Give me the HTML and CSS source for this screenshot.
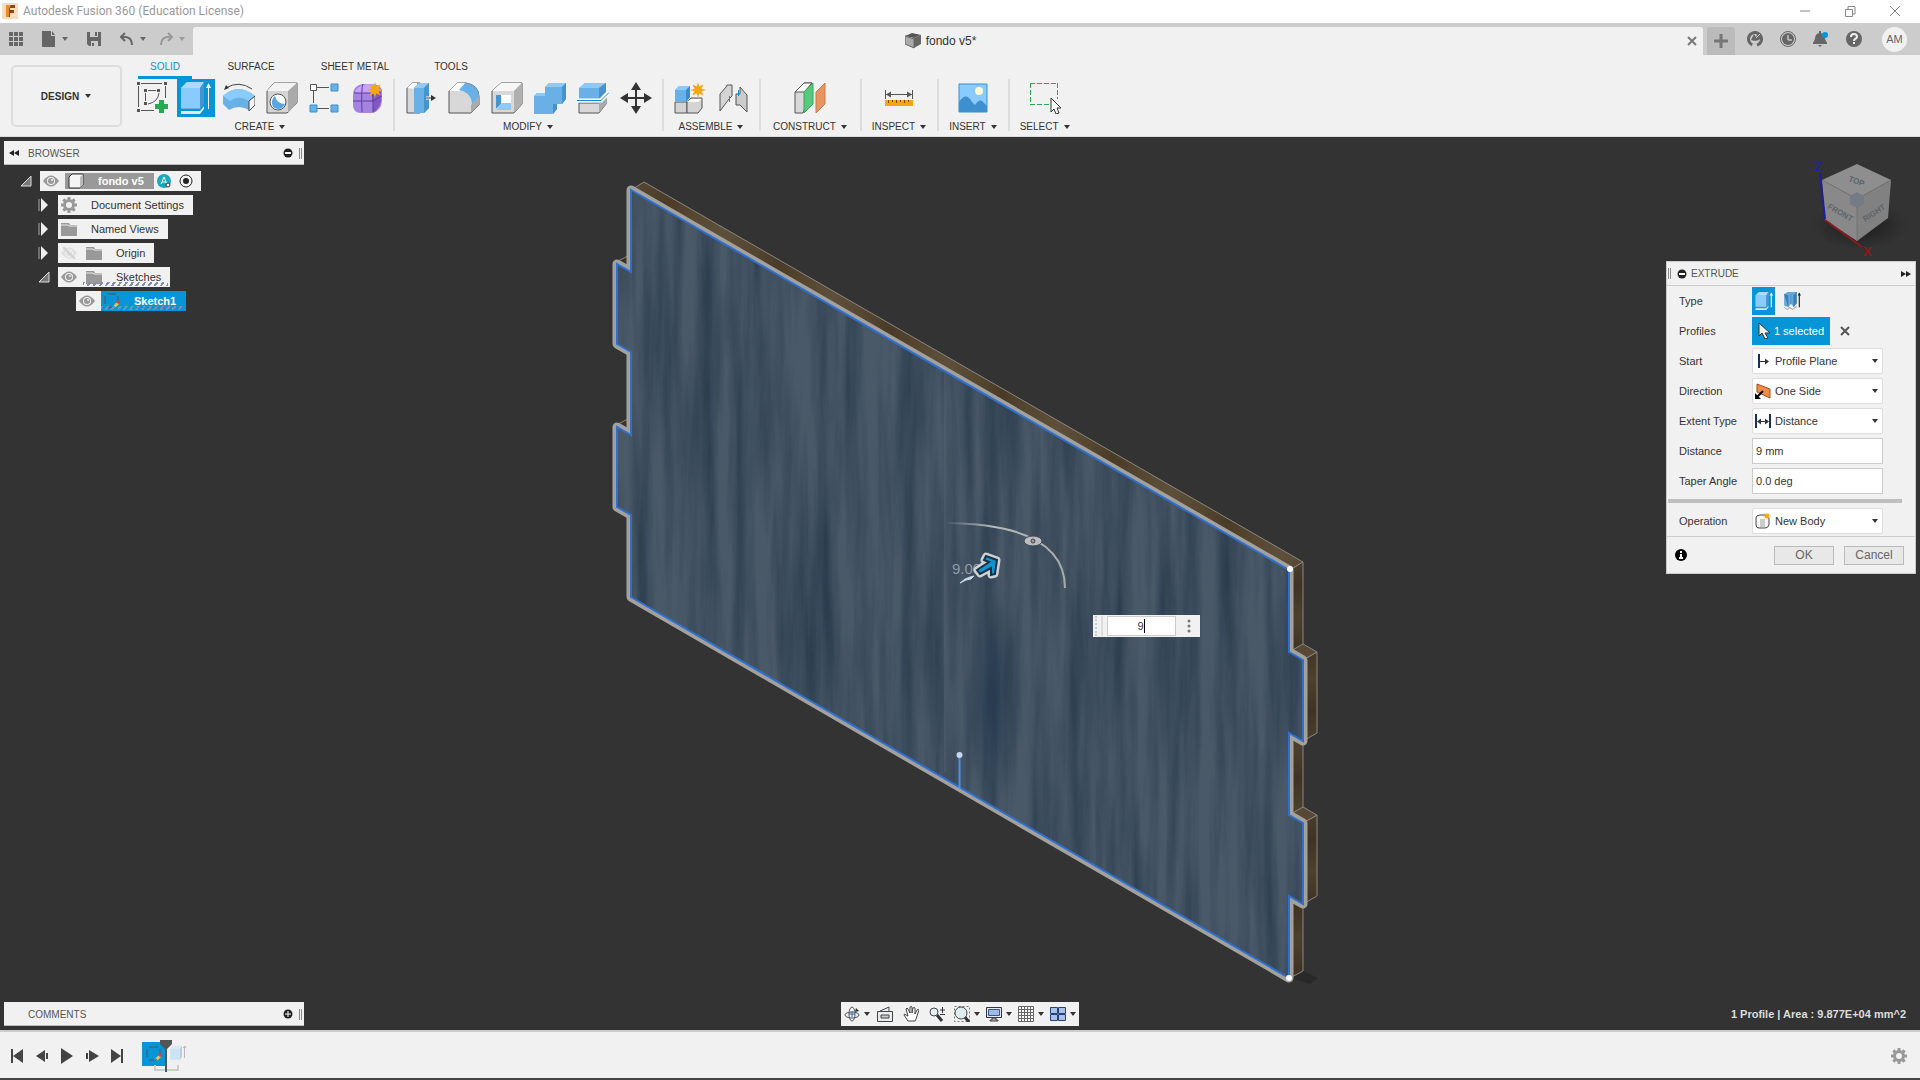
FILE: index.html
```html
<!DOCTYPE html>
<html lang="en">
<head>
    <meta charset="UTF-8">
    <title>Autodesk Fusion 360 (Education License)</title>
    <link rel="stylesheet" href="styles.css">
</head>
<body>
    <!-- shared icons -->
    <svg class="sprite" width="0" height="0">
        <symbol id="caret" viewBox="0 0 8 6"><path d="M1 1h6L4 5z" fill="currentColor"/></symbol>
        <symbol id="eye" viewBox="0 0 16 12"><path d="M0 6Q8-5 16 6Q8 17 0 6z" fill="#999"/><circle cx="8" cy="6" r="4" fill="#f1f1f1"/><circle cx="8" cy="6" r="3" fill="#999"/><circle cx="9" cy="5" r="1" fill="#f1f1f1"/></symbol>
        <symbol id="folder" viewBox="0 0 16 14"><path d="M0 1h8l1 2h7v11H0z" fill="#999"/><path d="M0 3h7l1 1h8" stroke="#e8e8e8" fill="none"/></symbol>
        <symbol id="gear" viewBox="0 0 16 16"><g fill="#999"><path d="M6.500 0h3v16h-3zM0 6.500h16v3H0z"/><path d="M6.500 0h3v16h-3zM0 6.500h16v3H0z" transform="rotate(45 8 8)"/><circle cx="8" cy="8" r="6"/></g><circle cx="8" cy="8" r="3" fill="#f1f1f1"/></symbol>
        <symbol id="opened" viewBox="0 0 12 12"><path d="M11 1v10H1z" fill="#777" stroke="#ddd"/></symbol>
        <symbol id="closed" viewBox="0 0 12 14"><path d="M1 1v12" stroke="#aaa" fill="none"/><path d="M3 0v14l7-7z" fill="#eee"/></symbol>
        <symbol id="sketch" viewBox="0 0 16 16"><path d="M3 1h9M1 3v8M14 3v6M3 14h5" fill="none" stroke="#555"/><path d="M9 15l1-3 3-3 2 2-3 3z" fill="#f3c13a"/><path d="M9 15l1-2 1 1z" fill="#333"/><path d="M12 9l2-2 2 2-2 2z" fill="#e23b3b"/></symbol>
        <symbol id="star" viewBox="0 0 16 16"><path d="M8 0l1.200 4.500L13.600 2.400 11.500 6.800 16 8l-4.500 1.200 2.100 4.400-4.400-2.100L8 16l-1.200-4.500-4.400 2.100 2.100-4.400L0 8l4.500-1.200L2.400 2.400l4.400 2.100z" fill="#f9a60a"/></symbol>
        <symbol id="prism" viewBox="0 0 32 32"><path d="M1 6l6-6h17v21l-4 6H1z" fill="#68b0e5"/><path d="M1 6l6-6h17l-4 6z" fill="#abdcff"/><path d="M1 6h19v20H1z" fill="#8acbff"/><path d="M20 6l4-6v21l-4 6z" fill="#4594cf"/><path d="M1 29h19l4-5v3l-4 5H1z" fill="#e6e6e6"/></symbol>
    </svg>

    <header class="title-bar">
        <svg width="16" height="16" viewBox="0 0 16 16"><path d="M0 0h16v16H0z" fill="#fbdcbd"/><path d="M4 2h9v3H8v2h4v3H8v4H4z" fill="#8b4a14"/><path d="M4 2h5l-2 4v8H4z" fill="#ec8b25"/></svg>
        <h1>Autodesk Fusion 360 (Education License)</h1>
        <div class="window-controls">
            <button aria-label="Minimize"><svg width="12" height="12"><path d="M1 6h10" stroke="#888"/></svg></button>
            <button aria-label="Restore"><svg width="12" height="12"><path d="M1.500 4.500h7v7h-7zM4 4V1.500h7V9H9" fill="none" stroke="#888"/></svg></button>
            <button aria-label="Close"><svg width="12" height="12"><path d="M1 1l10 10M11 1L1 11" stroke="#888"/></svg></button>
        </div>
    </header>

    <div class="tab-bar">
        <div class="quick-access">
            <button class="quick-grid" aria-label="Data panel"><svg width="14" height="14"><path d="M0 0h4v4H0zM5 0h4v4H5zM10 0h4v4h-4zM0 5h4v4H0zM5 5h4v4H5zM10 5h4v4h-4zM0 10h4v4H0zM5 10h4v4H5zM10 10h4v4h-4z" fill="#666"/></svg></button>
            <button class="quick-file" aria-label="File"><svg width="14" height="16"><path d="M0 0h9v5h4v11H0z" fill="#666"/><path d="M10 0l3 4h-3z" fill="#666"/></svg><svg width="8" height="6"><use href="#caret"/></svg></button>
            <button class="quick-save" aria-label="Save"><svg width="14" height="14"><path d="M0 0h14v14H2l-2-2z" fill="#666"/><path d="M3 0h8v5H3zM4 9h7v5H4z" fill="#ccc"/><path d="M8 0h2v4H8zM5 11h2v3H5z" fill="#666"/></svg></button>
            <button class="quick-undo" aria-label="Undo"><svg width="14" height="14"><path d="M5 1L1 5l4 4M1 5h5q6 1 6 8" stroke="#666" stroke-width="2" fill="none"/></svg><svg width="8" height="6"><use href="#caret"/></svg></button>
            <button class="quick-redo" aria-label="Redo"><svg width="14" height="14"><path d="M9 1l4 4-4 4M13 5H8q-6 1-6 8" stroke="#999" stroke-width="2" fill="none"/></svg><svg width="8" height="6"><use href="#caret"/></svg></button>
        </div>
        <div class="document-tab">
            <svg width="16" height="16"><path d="M0 3l7-3 9 2-7 3z" fill="#555"/><path d="M0 3l9 3v9l-9-4z" fill="#aaa" stroke="#666"/><path d="M9 5l7-3v9l-7 4z" fill="#666"/></svg>
            <span>fondo v5*</span>
            <button class="close-tab" aria-label="Close document"><svg width="10" height="10"><path d="M1 1l8 8M9 1L1 9" stroke="#777" stroke-width="2"/></svg></button>
        </div>
        <button class="new-tab" aria-label="New design"><svg width="14" height="14"><path d="M7 0v14M0 7h14" stroke="#777" stroke-width="3"/></svg></button>
        <div class="account-tools">
            <button aria-label="Extensions"><svg width="16" height="16"><circle cx="8" cy="8" r="6.500" fill="none" stroke="#666" stroke-width="3" stroke-dasharray="35 6" transform="rotate(115 8 8)"/><path d="M4 9l3-6 2 3 2-4 1 3 3 0-3 4-4 1z" fill="#666"/><path d="M9 7l4-4" stroke="#ccc"/></svg></button>
            <button aria-label="Job status"><svg width="16" height="16"><circle cx="8" cy="8" r="7.500" fill="none" stroke="#666"/><circle cx="8" cy="8" r="6" fill="#666"/><path d="M8 4v5h4" stroke="#eee" fill="none"/></svg></button>
            <button aria-label="Notifications"><svg width="16" height="16"><path d="M6 0h2v2q4 1 4 6l2 4v1H0v-1l2-4Q2 3 6 2zM5 14h4l-2 2z" fill="#666"/><circle cx="12" cy="4" r="3" fill="#0696d7"/></svg></button>
            <button aria-label="Help"><svg width="16" height="16"><circle cx="8" cy="8" r="8" fill="#666"/><path d="M5 6q0-3 3-3t3 3q0 1-2 2-1 1-1 2M8 11v2" stroke="#eee" stroke-width="2" fill="none"/></svg></button>
            <button class="avatar">AM</button>
        </div>
    </div>

    <div class="ribbon">
        <button class="workspace">DESIGN <svg width="8" height="6"><use href="#caret"/></svg></button>
        <div class="ribbon-main">
            <nav class="ribbon-tabs">
                <a class="tab-solid active" href="#">SOLID</a>
                <a class="tab-surface" href="#">SURFACE</a>
                <a class="tab-sheet" href="#">SHEET METAL</a>
                <a class="tab-tools" href="#">TOOLS</a>
            </nav>
            <div class="ribbon-groups">
                <div class="group">
                    <div class="tools">
                        <button aria-label="Create sketch"><svg width="32" height="32"><path d="M4 1.500h21M1.500 4v21M28.500 4v12M4 28.500h13" fill="none" stroke="#555"/><path d="M11 8.500h8M8.500 11v8M22 11q-1 9-11 11" fill="none" stroke="#555"/><path d="M0 0h3v3H0zM27 0h3v3h-3zM0 27h3v3H0zM7 7h3v3H7zM20 7h3v3h-3zM7 20h3v3H7z" fill="#555"/><path d="M22 18h5v4h4v5h-4v4h-5v-4h-4v-5h4z" fill="#22ab51"/></svg></button>
                        <button class="selected" aria-label="Extrude"><svg width="32" height="32"><use href="#prism"/><path d="M28.500 27V4" stroke="#fff"/><path d="M26 6l2.500-5L31 6z" fill="#fff"/></svg></button>
                        <button aria-label="Revolve"><svg width="32" height="32"><path d="M0 14Q15 0 32 14l-6 5v9q-10-6-20 0l-6-6z" fill="#68b0e5"/><path d="M0 14Q15 0 32 14l-6 5q-10-7-19 0z" fill="#8acbff"/><path d="M26 19l6-5v9l-6 6z" fill="#f5f5f5" stroke="#444"/><path d="M3 6q13-8 26 1" stroke="#444" fill="none"/><path d="M1 8l2-5 3 3z" fill="#333"/></svg></button>
                        <button aria-label="Hole"><svg width="32" height="32"><path d="M1 9l7-8h23v20L21 31H1z" fill="#d4d4d4" stroke="#555"/><path d="M1 9l7-8h23l-9 8z" fill="#f3f3f3"/><path d="M22 9l9-8v20l-9 10z" fill="#aaa"/><circle cx="12" cy="20" r="8" fill="#fff" stroke="#555"/><path d="M9 14q2 8 10 8-2 5-7 5-7-1-6-8 1-4 3-5z" fill="#56a6e4"/></svg></button>
                        <button aria-label="Rectangular pattern"><svg width="32" height="32"><path d="M8 5.500h12M4.500 9v12M8 26.500h12" stroke="#555"/><path d="M1.500 2.500h6v6h-6z" fill="#fff" stroke="#555"/><path d="M22 2h7v7h-7zM1 23h7v7H1zM22 23h7v7h-7z" fill="#68b0e5" stroke="#3d8fce"/></svg></button>
                        <button aria-label="Create form"><svg width="32" height="32"><path d="M1 13q0-9 9-11h8q12 0 12 8v9q-1 10-10 12H8q-7-1-7-8z" fill="#a583e3"/><path d="M3 9q5-7 15-7l6 2-5 7H5z" fill="#c6a4fa"/><path d="M21 12l8-3v11q-3 8-8 11z" fill="#8257c4"/><path d="M11 2q-2 4-1 28M1 19h20l9-5M2 11h18q1 0 1 19M21 11l4-6" stroke="#5e3d9c" fill="none"/><use href="#star" x="15" y="0" width="16" height="16"/></svg></button>
                    </div>
                    <button class="group-label">CREATE <svg width="8" height="6"><use href="#caret"/></svg></button>
                </div>
                <div class="group">
                    <div class="tools">
                        <button aria-label="Press pull"><svg width="32" height="32"><path d="M2 6l5-5h8v30H2z" fill="#d8d8d8" stroke="#555"/><path d="M2 6l5-5h5v6z" fill="#fff"/><path d="M9 6l5-5h10v25l-5 5H9z" fill="#68b0e5"/><path d="M9 6l5-5h10l-5 5z" fill="#8acbff"/><path d="M19 6l5-5v25l-5 5z" fill="#4594cf"/><path d="M21 16h6" stroke="#fff" stroke-width="3"/><path d="M21 16h7" stroke="#333"/><path d="M26 13l5 3-5 3z" fill="#333"/></svg></button>
                        <button aria-label="Fillet"><svg width="32" height="32"><path d="M1 9l8-8h9q13 2 13 14v8l-8 8H1z" fill="#d8d8d8" stroke="#555"/><path d="M9 1h9l-6 8H1z" fill="#fff"/><path d="M23 23l8-8v8l-8 8z" fill="#aaa"/><path d="M18 1q13 2 13 14l-7 7q-1-12-13-14l6-7z" fill="#68b0e5"/></svg></button>
                        <button aria-label="Shell"><svg width="32" height="32"><path d="M1 9l9-8h21v21l-8 9H1z" fill="#d8d8d8" stroke="#555"/><path d="M1 9l9-8h21l-8 8z" fill="#f6f6f6"/><path d="M23 9l8-8v21l-8 9z" fill="#b0b0b0"/><path d="M5 13h15v15H5z" fill="#fff"/><path d="M5 13h5v9l-5 5z" fill="#4594cf"/><path d="M5 28l6-7h9v7z" fill="#8acbff"/></svg></button>
                        <button aria-label="Combine"><svg width="32" height="32"><path d="M0 14l3-3h8V5l4-4h17v16l-4 5h-5v5l-4 5H0z" fill="#68b0e5"/><path d="M0 14l3-3h8v3zM11 5l4-4h17l-4 4z" fill="#8acbff"/><path d="M28 5l4-4v16l-4 5zM19 22h4v5l-4 5z" fill="#4594cf"/></svg></button>
                        <button aria-label="Split body"><svg width="32" height="32"><path d="M2 21h20l7-8v9l-7 9H2z" fill="#d8d8d8" stroke="#555"/><path d="M22 21l7-8v9l-7 9z" fill="#aaa"/><path d="M2 6l6-5h21v8l-7 8H2z" fill="#68b0e5"/><path d="M2 6l6-5h21l-7 5z" fill="#8acbff"/><path d="M22 6l7-5v9l-7 7z" fill="#4594cf"/><path d="M0 18.500h24l8-8" stroke="#fff" stroke-width="4" fill="none"/><path d="M0 18.500h24l8-8" stroke="#0b86d9" fill="none"/></svg></button>
                        <button aria-label="Move"><svg width="32" height="32"><path d="M16 5v22M5 16h22" stroke="#333" stroke-width="2"/><path d="M16 0l5 8H11zM16 32l5-8H11zM0 16l8-5v10zM32 16l-8-5v10z" fill="#333"/></svg></button>
                    </div>
                    <button class="group-label">MODIFY <svg width="8" height="6"><use href="#caret"/></svg></button>
                </div>
                <div class="group">
                    <div class="tools">
                        <button aria-label="New component"><svg width="32" height="32"><path d="M1 20h12v11H1z" fill="#d4d4d4" stroke="#555"/><path d="M13 20l4-4h11v10l-4 5H13z" fill="#d4d4d4" stroke="#555"/><path d="M13 20l4-3h11l-4 3z" fill="#fff"/><path d="M1 8l4-4h11v11l-4 5H1z" fill="#68b0e5"/><path d="M1 8l4-4h11l-4 4z" fill="#8acbff"/><path d="M12 8l4-4v11l-4 5z" fill="#3d8bc6"/><use href="#star" x="16" y="0" width="16" height="16"/></svg></button>
                        <button aria-label="Joint"><svg width="32" height="32"><path d="M3 12l6-7 1-2h5v11l-3 3-3 4-6 8z" fill="#d4d4d4" stroke="#555"/><path d="M23 5l7 8v17l-7-7h-4V12h4z" fill="#ccc" stroke="#555"/><path d="M12.500 14v6M21.500 8v6" stroke="#0696d7"/></svg></button>
                    </div>
                    <button class="group-label">ASSEMBLE <svg width="8" height="6"><use href="#caret"/></svg></button>
                </div>
                <div class="group construct">
                    <div class="tools">
                        <button aria-label="Offset plane"><svg width="32" height="32"><path d="M1 10l9-9h8v5L9 31H1z" fill="#d8d8d8" stroke="#555"/><path d="M1 10l9-9h8l-8 9z" fill="#fff" stroke="#555"/><path d="M10 10l9-9v21l-9 9z" fill="#58c87c" stroke="#38a55d"/><path d="M22 10l9-9v21l-9 9z" fill="#e79562" stroke="#c97b49"/></svg></button>
                    </div>
                    <button class="group-label">CONSTRUCT <svg width="8" height="6"><use href="#caret"/></svg></button>
                </div>
                <div class="group">
                    <div class="tools">
                        <button aria-label="Measure"><svg width="32" height="32"><path d="M2.500 8v9M29.500 8v9M3 12.500h26" stroke="#555"/><path d="M3 12.500l5-3v6zM29 12.500l-5-3v6z" fill="#555"/><path d="M2 18h28v6H2z" fill="#f9a60a"/><path d="M5.500 18v3M9.500 18v2M13.500 18v3M17.500 18v2M21.500 18v3M25.500 18v2" stroke="#704c08"/></svg></button>
                    </div>
                    <button class="group-label">INSPECT <svg width="8" height="6"><use href="#caret"/></svg></button>
                </div>
                <div class="group">
                    <div class="tools">
                        <button aria-label="Insert image"><svg width="32" height="32"><path d="M2 2h28v28H2z" fill="#8acbff" stroke="#3d8fce"/><path d="M2 20q7-11 13 0l3 3q5-7 8-3l4 4v6H2z" fill="#3d8fce"/><circle cx="22" cy="9" r="4" fill="#fffbd0"/></svg></button>
                    </div>
                    <button class="group-label">INSERT <svg width="8" height="6"><use href="#caret"/></svg></button>
                </div>
                <div class="group">
                    <div class="tools">
                        <button aria-label="Select"><svg width="32" height="32"><path d="M1 1.500h27M1 22.500h20M1.500 1v22M28.500 1v16" stroke="#22ab51" stroke-dasharray="5 2"/><path d="M22 16v14l3-3 2 5 3-1-2-5h4z" fill="#fff" stroke="#333"/></svg></button>
                    </div>
                    <button class="group-label">SELECT <svg width="8" height="6"><use href="#caret"/></svg></button>
                </div>
            </div>
        </div>
    </div>

    <main class="viewport">
        <!-- model, drawn in window coordinates -->
        <svg class="model" viewBox="0 137 1920 893" preserveAspectRatio="xMidYMid slice">
            <defs>
                <filter id="grain" x="0" y="0" width="1" height="1" color-interpolation-filters="sRGB">
                    <feTurbulence type="fractalNoise" baseFrequency="0.06 0.004" numOctaves="5" seed="11"/>
                    <feColorMatrix values="0 0 0 0 .17  0 0 0 0 .24  0 0 0 0 .31  1.800 0 0 0 -.6"/>
                    <feComposite in2="SourceGraphic" operator="in"/>
                </filter>
                <linearGradient id="edge" x1="0" y1="0" x2="60" y2="20" gradientUnits="userSpaceOnUse" spreadMethod="reflect">
                    <stop offset="0" stop-color="#5e4f3b"/><stop offset=".6" stop-color="#54452f"/><stop offset="1" stop-color="#493b28"/>
                </linearGradient>
                <linearGradient id="side" x1="0" y1="0" x2="8" y2="30" gradientUnits="userSpaceOnUse" spreadMethod="reflect">
                    <stop offset="0" stop-color="#4c402e"/><stop offset="1" stop-color="#3f3424"/>
                </linearGradient>
                <radialGradient id="knot"><stop offset="0" stop-color="#20374f" stop-opacity=".6"/><stop offset="1" stop-color="#20374f" stop-opacity="0"/></radialGradient>
                <linearGradient id="arc"><stop offset="0" stop-color="#bbb" stop-opacity="0"/><stop offset=".4" stop-color="#bbb"/><stop offset="1" stop-color="#aaa"/></linearGradient>
                <path id="face" d="M631 190L1289 570V652L1303 660V741L1289 733V815L1303 823V904L1289 896V978L631 597V515L617 507V427L631 435V352L617 344V264L631 272z"/>
            </defs>
            <path d="M1292 978l12-7 14 7-8 6z" fill="#292929"/>
            <g stroke="#8a8780">
                <path d="M631 190l13-8L1303 562l-13 8z" fill="url(#edge)"/>
                <path d="M1290 570l13-8v409l-13 7z" fill="url(#side)"/>
                <path d="M1303 660l14-8v81l-14 8zM1303 823l14-8v81l-14 8z" fill="url(#side)"/>
                <path d="M1289 652l14-8 14 8-14 8zM1289 815l14-8 14 8-14 8z" fill="#574934"/>
                <path d="M616 262l14-7v16zM616 425l14-7v16z" fill="#3c3222"/>
            </g>
            <use href="#face" fill="none" stroke="#a3a19e" stroke-width="9" stroke-linejoin="round"/>
            <use href="#face" fill="#4a5968"/>
            <use href="#face" fill="#4a5968" filter="url(#grain)"/>
            <ellipse cx="990" cy="700" rx="28" ry="110" fill="url(#knot)"/>
            <path d="M945 372v400" stroke="#5d6873" stroke-width="2" opacity=".3"/>
            <use href="#face" fill="none" stroke="#2f70cf" stroke-width="2"/>
            <circle cx="1290" cy="569" r="3" fill="#fff"/>
            <circle cx="1289" cy="978" r="3" fill="#fff"/>
            <path d="M959.500 757v31" stroke="#4b93e0" stroke-width="2"/>
            <circle cx="959.500" cy="755" r="3" fill="#c5d8ee"/>
            <path d="M945 523Q1065 524 1065 588" fill="none" stroke="url(#arc)" stroke-width="2"/>
            <ellipse cx="1033" cy="541" rx="9" ry="5" fill="#babdc2" stroke="#3f4750"/>
            <circle cx="1033" cy="541" r="2" fill="#999" stroke="#444"/>
            <text x="952" y="574" class="dimension">9.00</text>
            <path d="M960 583l5-4 5-2 4-1-3 3-5 1z" fill="#c8d8ee" stroke="#c8d8ee"/>
            <path d="M977 570l12-8-5-2 2-4 11 4-2 14-4 1v-7l-11 6z" stroke="#cfd2d5" stroke-width="7" stroke-linejoin="round" fill="none"/>
            <path d="M977 570l12-8-5-2 2-4 11 4-2 14-4 1v-7l-11 6z" fill="#1193cf" stroke="#173142" stroke-width="2"/>
        </svg>

        <section class="browser">
            <div class="panel-bar">
                <button class="collapse" aria-label="Collapse"><svg width="12" height="8"><path d="M6 1v6L1 4zM11 1v6L6 4z" fill="#222"/></svg></button>
                <h2>BROWSER</h2>
                <button aria-label="Options"><svg width="10" height="10"><circle cx="5" cy="5" r="4.500" fill="#222"/><path d="M2 5h6" stroke="#fff" stroke-width="2"/></svg></button>
                <i class="grip"></i>
            </div>
            <ul class="tree">
                <li class="level-0">
                    <button aria-label="Close fondo v5"><svg width="12" height="12"><use href="#opened"/></svg></button>
                    <div class="node root">
                        <svg width="16" height="12"><use href="#eye"/></svg>
                        <span class="component"><svg width="16" height="16"><path d="M1 4l3-3h11v11l-3 3H1z" fill="#f4f4f4" stroke="#333"/><path d="M12 4l3-3v11l-3 3z" fill="#bbb"/></svg>fondo v5</span>
                        <svg width="14" height="14"><circle cx="7" cy="7" r="7" fill="#19a9bd"/><path d="M4 10l3-7 3 7M5 8h4" stroke="#fff" fill="none"/><circle cx="11" cy="11" r="2" fill="#fff" stroke="#333"/></svg>
                        <svg width="14" height="14"><circle cx="7" cy="7" r="6" fill="none" stroke="#222"/><circle cx="7" cy="7" r="3" fill="#222"/></svg>
                    </div>
                </li>
                <li class="level-1">
                    <button aria-label="Open Document Settings"><svg width="12" height="14"><use href="#closed"/></svg></button>
                    <div class="node"><svg width="16" height="16"><use href="#gear"/></svg><span>Document Settings</span></div>
                </li>
                <li class="level-1">
                    <button aria-label="Open Named Views"><svg width="12" height="14"><use href="#closed"/></svg></button>
                    <div class="node"><svg width="16" height="14"><use href="#folder"/></svg><span>Named Views</span></div>
                </li>
                <li class="level-1">
                    <button aria-label="Open Origin"><svg width="12" height="14"><use href="#closed"/></svg></button>
                    <div class="node"><svg class="hidden-eye" width="16" height="12"><use href="#eye"/><path d="M2 0l12 12" stroke="#555" stroke-width="2"/></svg><svg width="16" height="14"><use href="#folder"/></svg><span>Origin</span></div>
                </li>
                <li class="level-1">
                    <button aria-label="Close Sketches"><svg width="12" height="12"><use href="#opened"/></svg></button>
                    <div class="node hatched"><svg width="16" height="12"><use href="#eye"/></svg><svg width="16" height="14"><use href="#folder"/></svg><span>Sketches</span></div>
                </li>
                <li class="level-2">
                    <div class="node hatched"><svg width="16" height="12"><use href="#eye"/></svg><span class="component blue"><svg width="16" height="16"><use href="#sketch"/></svg>Sketch1</span></div>
                </li>
            </ul>
        </section>

        <svg class="view-cube" width="100" height="105">
            <defs><radialGradient id="shade"><stop offset="0" stop-color="#1c1c1c"/><stop offset="1" stop-color="#333"/></radialGradient></defs>
            <ellipse cx="50" cy="70" rx="48" ry="24" fill="url(#shade)"/>
            <path d="M47 9l34 16-34 19-35-19z" fill="#8e8e8e"/>
            <path d="M12 25l35 19v42L15 65z" fill="#898989"/>
            <path d="M47 44l34-19-3 38-31 23z" fill="#818181"/>
            <path d="M12 25l35 19 34-19M47 44v42" stroke="#737373" fill="none"/>
            <path d="M40 41l7-4 7 4v8l-7 4-7-4z" fill="#757b82"/>
            <path d="M10 18l5 46" stroke="#1e1e9e" stroke-width="2"/>
            <path d="M15 65l37 27" stroke="#8b1a1a" stroke-width="2"/>
            <g font-weight="bold" font-size="8" fill="#5d646b">
                <text x="38" y="26" transform="rotate(20 38 26)">TOP</text>
                <text x="17" y="53" transform="rotate(30 17 53)">FRONT</text>
                <text x="55" y="67" transform="rotate(-33 55 67)">RIGHT</text>
            </g>
            <text x="4" y="16" class="axis-z">Z</text>
            <text x="53" y="101" class="axis-x">X</text>
        </svg>

        <form class="extrude">
            <div class="extrude-header">
                <i class="grip"></i>
                <svg width="10" height="10"><circle cx="5" cy="5" r="4.500" fill="#222"/><path d="M2 5h6" stroke="#fff" stroke-width="2"/></svg>
                <h2>EXTRUDE</h2>
                <button type="button" aria-label="Dock"><svg width="10" height="8"><path d="M0 1v6l5-3zM5 1v6l5-3z" fill="#222"/></svg></button>
            </div>
            <div class="row">
                <span class="row-label">Type</span>
                <button type="button" class="type on" aria-label="Extrude"><svg width="18" height="18" viewBox="0 0 32 32"><use href="#prism"/><path d="M29 27V2" stroke="#fff" stroke-width="2"/><path d="M26 6l3-5 3 5z" fill="#fff"/></svg></button>
                <button type="button" class="type" aria-label="Thin extrude"><svg width="18" height="18" viewBox="0 0 32 32"><path d="M2 26l5 4 5-4 5 4 7-6v3l-7 5-5-3-5 3-5-4z" fill="#aaa"/><path d="M2 4l6-4h16v20l-5 6-5-5-5 6-7-3z" fill="#68a8d8"/><path d="M2 4l7 2v20M14 4v18M19 6l5-6v20l-5 6z" fill="#3d80b8" stroke="#3d80b8"/><path d="M29 27V2" stroke="#222" stroke-width="2"/><path d="M26 6l3-5 3 5z" fill="#222"/></svg></button>
            </div>
            <div class="row">
                <span class="row-label">Profiles</span>
                <button type="button" class="selection"><svg width="12" height="16"><path d="M1 0v13l3-3 3 6 3-1-3-5h5z" fill="#eee" stroke="#333"/></svg>1 selected</button>
                <button type="button" class="clear" aria-label="Clear selection"><svg width="10" height="10"><path d="M1 1l8 8M9 1L1 9" stroke="#555" stroke-width="2"/></svg></button>
            </div>
            <div class="row">
                <label class="row-label" for="start">Start</label>
                <div class="picker">
                    <svg width="16" height="16"><path d="M4 1v14" stroke="#15305c" stroke-width="2"/><path d="M5 8.500h8" stroke="#333"/><path d="M10 5.500l4 3-4 3z" fill="#333"/></svg>
                    <select id="start"><option>Profile Plane</option></select>
                    <svg class="drop" width="8" height="6"><use href="#caret"/></svg>
                </div>
            </div>
            <div class="row">
                <label class="row-label" for="direction">Direction</label>
                <div class="picker">
                    <svg width="16" height="16"><path d="M2 1l13 5v9L2 9z" fill="#f08b48" stroke="#a44e1c"/><path d="M1 15l7-7" stroke="#000" stroke-width="2"/><path d="M0 16v-6l6 6z" fill="#000"/></svg>
                    <select id="direction"><option>One Side</option></select>
                    <svg class="drop" width="8" height="6"><use href="#caret"/></svg>
                </div>
            </div>
            <div class="row">
                <label class="row-label" for="extent">Extent Type</label>
                <div class="picker">
                    <svg width="16" height="16"><path d="M1 1v14M15 1v14" stroke="#15305c" stroke-width="2"/><path d="M4 8.500h8" stroke="#333"/><path d="M6 5.500l-4 3 4 3zM10 5.500l4 3-4 3z" fill="#333"/></svg>
                    <select id="extent"><option>Distance</option></select>
                    <svg class="drop" width="8" height="6"><use href="#caret"/></svg>
                </div>
            </div>
            <div class="row">
                <label class="row-label" for="distance">Distance</label>
                <input id="distance" type="text" value="9 mm">
            </div>
            <div class="row">
                <label class="row-label" for="taper">Taper Angle</label>
                <input id="taper" type="text" value="0.0 deg">
            </div>
            <hr>
            <div class="row">
                <label class="row-label" for="operation">Operation</label>
                <div class="picker">
                    <svg width="16" height="16"><path d="M1 5q0-3 4-3h6q3 1 3 4v6q-1 3-4 3H4q-3 0-3-3z" fill="#f7f7f7" stroke="#444"/><path d="M5 6h5v8H5z" fill="#ccc"/><use href="#star" x="8" y="-1" width="8" height="8"/></svg>
                    <select id="operation"><option>New Body</option></select>
                    <svg class="drop" width="8" height="6"><use href="#caret"/></svg>
                </div>
            </div>
            <div class="extrude-footer">
                <svg width="12" height="12"><circle cx="6" cy="6" r="6" fill="#000"/><path d="M6 2v2M6 5v4M4 9h4" stroke="#fff" stroke-width="2" fill="none"/></svg>
                <button type="button">OK</button>
                <button type="button">Cancel</button>
            </div>
        </form>

        <div class="value-box">
            <i class="drag"></i>
            <input type="text" value="9" aria-label="Distance value">
            <i class="cursor"></i>
            <button aria-label="More"><svg width="4" height="14"><circle cx="2" cy="2" r="1.500" fill="#777"/><circle cx="2" cy="7" r="1.500" fill="#777"/><circle cx="2" cy="12" r="1.500" fill="#777"/></svg></button>
        </div>

        <section class="comments panel-bar">
            <h2>COMMENTS</h2>
            <button aria-label="Add comment"><svg width="10" height="10"><circle cx="5" cy="5" r="4.500" fill="#222"/><path d="M2 5h6M5 2v6" stroke="#fff"/></svg></button>
            <i class="grip"></i>
        </section>

        <div class="nav-bar">
            <button class="menu" aria-label="Orbit"><svg width="16" height="16"><ellipse cx="8" cy="9" rx="7" ry="3" fill="none" stroke="#555"/><ellipse cx="8" cy="8" rx="3" ry="7" fill="none" stroke="#555"/><path d="M5 8h6M8 5v6" stroke="#1976d2"/><path d="M12 2l3 3-4 1z" fill="#333"/></svg><svg width="8" height="6"><use href="#caret"/></svg></button>
            <button aria-label="Look at"><svg width="16" height="16"><path d="M.500 5.500h15v10H.500zM3 5l9-4v4" fill="#e9ecf0" stroke="#444"/><path d="M4 9h8v3H4z" fill="#ccc" stroke="#444"/></svg></button>
            <button aria-label="Pan"><svg width="16" height="16"><path d="M5 15L1 9q0-2 2 0l2 1-2-7q1-2 2 0l2 4V1q1-1 2 0v6l1-5q2-1 2 0v6l2-4q1-1 2 0l-3 9-1 2z" fill="#fff" stroke="#444"/></svg></button>
            <button aria-label="Zoom"><svg width="16" height="16"><path d="M8 9l5 6" stroke="#333" stroke-width="3"/><circle cx="5" cy="6" r="4" fill="#e4f0f3" stroke="#444"/><path d="M11 4h5M13.500 1v6M11 8.500h5" stroke="#333"/></svg></button>
            <button class="menu" aria-label="Fit"><svg width="16" height="16"><path d="M.500.500h15v15H.500z" fill="none" stroke="#777" stroke-dasharray="2 2"/><path d="M10 10l5 6" stroke="#333" stroke-width="3"/><circle cx="7" cy="7" r="6" fill="#dfecef" stroke="#444"/></svg><svg width="8" height="6"><use href="#caret"/></svg></button>
            <button class="menu" aria-label="Display settings"><svg width="16" height="16"><path d="M.500 1.500h15v10H.500z" fill="#e4e8f2" stroke="#334"/><path d="M2.500 3.500h11v6h-11z" fill="#9dbbe6" stroke="#35558c"/><path d="M6 12h4v2h2v1H4v-1h2z" fill="#aaa" stroke="#444"/></svg><svg width="8" height="6"><use href="#caret"/></svg></button>
            <button class="menu" aria-label="Grid and snaps"><svg width="16" height="16"><path d="M.500.500h15v15H.500zM.500 3.500h15M.500 6.500h15M.500 9.500h15M.500 12.500h15M3.500 0v16M6.500 0v16M9.500 0v16M12.500 0v16" fill="#fff" stroke="#666"/></svg><svg width="8" height="6"><use href="#caret"/></svg></button>
            <button class="menu" aria-label="Viewports"><svg width="16" height="14"><path d="M.500.500h7v6h-7zM8.500.500h7v6h-7zM.500 7.500h7v6h-7zM8.500 7.500h7v6h-7z" fill="#a9c1e6" stroke="#24427a"/></svg><svg width="8" height="6"><use href="#caret"/></svg></button>
        </div>

        <p class="selection-info">1 Profile | Area : 9.877E+04 mm^2</p>
    </main>

    <footer class="timeline">
        <button aria-label="Go to start"><svg width="14" height="14"><path d="M1 0v14" stroke="#444" stroke-width="2"/><path d="M12 0v14L2 7z" fill="#444"/></svg></button>
        <button aria-label="Step back"><svg width="14" height="14"><path d="M9 1v12L0 7z" fill="#444"/><path d="M11 4v6" stroke="#444" stroke-width="2"/></svg></button>
        <button aria-label="Play"><svg width="14" height="16"><path d="M0 0v16l12-8z" fill="#444"/></svg></button>
        <button aria-label="Step forward"><svg width="14" height="14"><path d="M3 1v12l10-6z" fill="#444"/><path d="M1 4v6" stroke="#444" stroke-width="2"/></svg></button>
        <button aria-label="Go to end"><svg width="14" height="14"><path d="M0 0v14l10-7z" fill="#444"/><path d="M11 0v14" stroke="#444" stroke-width="2"/></svg></button>
        <svg class="features" width="48" height="34">
            <path d="M0 3h24v24H0z" fill="#0696d7"/>
            <use href="#sketch" x="4" y="7" width="16" height="16"/>
            <use href="#prism" x="28" y="7" width="16" height="16" opacity=".35"/>
            <path d="M42.500 7v12M41 9l2-2 1 2" stroke="#bbb" fill="none"/>
            <path d="M13 26v5h23v-5" stroke="#ccc" stroke-width="2" fill="none"/>
            <path d="M18 1h12v4l-5 5v23h-2V10l-5-5z" fill="#555"/>
        </svg>
        <button class="settings" aria-label="Settings"><svg width="16" height="16"><use href="#gear"/></svg></button>
    </footer>
</body>
</html>
```
FILE: styles.css
```css
* {
    box-sizing: border-box;
}
body {
    margin: 0;
    min-height: 100vh;
    display: flex;
    flex-direction: column;
    font-family: "Liberation Sans", Arial, sans-serif;
    font-size: 11px;
    color: #333;
    background-color: #f1f1f1;
}
button {
    display: flex;
    flex: none;
    align-items: center;
    justify-content: center;
    padding: 0;
    border: none;
    background: none;
    font: inherit;
    color: inherit;
}
svg {
    display: block;
    flex: none;
}
h1, h2, p, ul {
    margin: 0;
    padding: 0;
    font-weight: normal;
}
.sprite {
    position: absolute;
}

/* title bar */
.title-bar {
    height: 23px;
    padding: 0 19px 1px 2px;
    display: flex;
    align-items: center;
    gap: 5px;
    background-color: #fff;
}
.title-bar h1 {
    font: 12px Roboto, sans-serif;
    color: #999;
}
.window-controls {
    margin-left: auto;
    display: flex;
    gap: 33px;
}

/* document tabs */
.tab-bar {
    height: 32px;
    display: flex;
    background-color: #ccc;
    color: #666;
}
.quick-access {
    width: 193px;
    padding-left: 9px;
    display: flex;
}
.quick-access button {
    gap: 5px;
    justify-content: flex-start;
}
.quick-grid {
    width: 33px;
}
.quick-file {
    width: 45px;
}
.quick-save {
    width: 33px;
}
.quick-undo {
    width: 39px;
}
.quick-redo {
    width: 34px;
    color: #999;
}
.document-tab {
    flex: 1;
    margin-top: 4px;
    padding: 0 6px;
    display: flex;
    align-items: center;
    justify-content: center;
    gap: 5px;
    background-color: #f1f1f1;
    border-radius: 3px 3px 0 0;
    font-size: 12px;
    color: #333;
}
.document-tab svg:first-child {
    margin-left: auto;
}
.close-tab {
    margin-left: auto;
}
.new-tab {
    width: 28px;
    margin: 4px 12px 0 4px;
    border-radius: 3px 3px 0 0;
    background-color: #bbb;
}
.account-tools {
    display: flex;
    align-items: center;
    gap: 17px;
    padding-right: 13px;
}
.avatar {
    width: 25px;
    height: 25px;
    margin-left: 3px;
    border-radius: 50%;
    background-color: #f1f1f1;
}

/* ribbon */
.ribbon {
    height: 82px;
    padding-left: 11px;
    display: flex;
    border-bottom: 1px solid #ddd;
    font-size: 10px;
}
.workspace {
    width: 111px;
    height: 62px;
    margin: 10px 12px 0 0;
    gap: 5px;
    border: 2px solid #ddd;
    border-radius: 5px;
    font-weight: bold;
}
.ribbon-main {
    flex: 1;
}
.ribbon-tabs {
    height: 24px;
    display: flex;
    padding-left: 4px;
}
.ribbon-tabs a {
    padding-top: 6px;
    text-align: center;
    text-decoration: none;
    color: #333;
}
.tab-solid {
    width: 54px;
}
.ribbon-tabs .active {
    color: #0696d7;
    border-bottom: 3px solid #0696d7;
}
.tab-surface {
    width: 118px;
}
.tab-sheet {
    width: 90px;
}
.tab-tools {
    width: 102px;
}
.ribbon-groups {
    display: flex;
}
.group {
    height: 52px;
    padding: 0 7px;
    border-right: 2px solid #ddd;
}
.group:first-child {
    padding: 0 6px 0 0;
}
.group:last-child {
    border: none;
}
.tools {
    display: flex;
    justify-content: center;
    gap: 5px;
}
.tools button {
    width: 38px;
    height: 38px;
}
.tools .selected {
    background-color: #0696d7;
}
.group-label {
    margin: 4px auto 0;
    padding: 0 3px;
    gap: 4px;
    white-space: nowrap;
}
.construct .group-label {
    padding: 0 5px;
}

/* viewport */
.viewport {
    flex: 1;
    position: relative;
    overflow: hidden;
    background-color: #333;
}
.model {
    position: absolute;
    width: 100%;
    height: 100%;
}
.dimension {
    font-size: 15px;
    fill: #8d9aa7;
}
.panel-bar {
    width: 300px;
    height: 24px;
    padding: 1px 2px 0 4px;
    display: flex;
    align-items: center;
    gap: 6px;
    background-color: #f1f1f1;
    border-bottom: 1px solid #bbb;
}
.panel-bar h2, .extrude h2 {
    flex: 1;
    font-size: 10px;
    color: #555;
}
.panel-bar .collapse {
    margin-right: 2px;
}
.grip {
    width: 3px;
    height: 11px;
    border-left: 1px solid #888;
    border-right: 1px solid #888;
}
.browser {
    position: absolute;
    top: 4px;
    left: 4px;
}
.comments {
    position: absolute;
    left: 4px;
    bottom: 4px;
    padding-left: 24px;
}

/* browser tree */
.tree {
    margin-top: 6px;
    list-style: none;
}
.tree li {
    height: 20px;
    margin-bottom: 4px;
    display: flex;
    align-items: center;
    gap: 8px;
}
.level-0 {
    padding-left: 16px;
}
.level-1 {
    padding-left: 34px;
}
.level-2 {
    padding-left: 72px;
}
.node {
    height: 20px;
    padding: 0 9px 0 3px;
    display: flex;
    align-items: center;
    gap: 9px;
    background-color: #f1f1f1;
}
.node > span {
    margin-left: 5px;
}
.node.root {
    padding-right: 8px;
    gap: 6px;
}
.node .component {
    height: 16px;
    margin-left: 0;
    padding: 0 10px 0 3px;
    display: flex;
    align-items: center;
    gap: 14px;
    font-weight: bold;
    color: #fff;
    background-color: #999;
}
.root > svg:nth-of-type(2) {
    margin: 0 2px 0 -3px;
}
.node .blue {
    height: 20px;
    margin: 0 -9px 0 -3px;
    background-color: #0696d7;
}
.hidden-eye {
    opacity: .2;
}
.hatched {
    position: relative;
}
.hatched::after {
    content: "";
    position: absolute;
    left: 25px;
    right: 2px;
    bottom: 1px;
    height: 4px;
    background: repeating-linear-gradient(125deg, #7d8fb0 0 2px, transparent 2px 5px);
}

.view-cube {
    position: absolute;
    top: 18px;
    right: 10px;
}
.axis-z, .axis-x {
    font-size: 13px;
    font-weight: bold;
    fill: #24249e;
}
.axis-x {
    fill: #8b1a1a;
}

/* extrude dialog */
.extrude {
    position: absolute;
    top: 124px;
    right: 4px;
    width: 250px;
    background-color: #f1f1f1;
    border: 1px solid #ccc;
}
.extrude-header {
    height: 24px;
    padding: 0 4px 0 1px;
    display: flex;
    align-items: center;
    gap: 4px;
    border-bottom: 1px solid #ccc;
}
.extrude-header svg {
    margin-left: 2px;
}
.row {
    height: 30px;
    padding-left: 12px;
    display: flex;
    align-items: center;
}
.row-label {
    width: 73px;
}
.type {
    width: 23px;
    height: 28px;
    margin-right: 5px;
}
.type.on {
    background-color: #0696d7;
}
.selection {
    width: 78px;
    height: 28px;
    gap: 4px;
    background-color: #0696d7;
    color: #fff;
}
.clear {
    margin-left: 10px;
}
.picker {
    position: relative;
    width: 131px;
}
.picker svg {
    position: absolute;
    top: 5px;
    left: 3px;
}
.picker .drop {
    top: 10px;
    left: 119px;
}
.picker select, .row input {
    width: 131px;
    height: 26px;
    padding: 0 4px;
    display: block;
    appearance: none;
    border: 1px solid #ccc;
    border-radius: 0;
    background-color: #fff;
    font: inherit;
    color: #333;
}
.picker select {
    padding-left: 22px;
    border-color: #ddd;
    border-radius: 2px;
}
.row input {
    padding: 0 3px;
}
.extrude hr {
    height: 4px;
    margin: 3px 13px 3px 1px;
    border: none;
    background-color: #bfbfbf;
}
.extrude-footer {
    height: 37px;
    padding: 0 11px 0 8px;
    display: flex;
    align-items: center;
    gap: 10px;
    border-top: 1px solid #ccc;
}
.extrude-footer svg {
    margin-right: auto;
}
.extrude-footer button {
    width: 60px;
    height: 19px;
    border: 1px solid #bbb;
    background-color: #e8e8e8;
    font-size: 12px;
    color: #666;
}

/* value box next to the manipulator */
.value-box {
    position: absolute;
    top: 478px;
    left: calc(50% + 133px);
    width: 107px;
    height: 22px;
    display: flex;
    align-items: center;
    gap: 4px;
    background-color: #f1f1f1;
}
.value-box .drag {
    width: 8px;
    height: 20px;
    margin-left: 2px;
    border-left: 2px dotted #ccc;
    border-right: 2px solid #ddd;
}
.value-box input {
    width: 69px;
    height: 20px;
    padding: 0 5px 0 3px;
    border: 1px solid #ccc;
    font: inherit;
    color: #333;
    text-align: center;
}
.value-box .cursor {
    position: absolute;
    left: 51px;
    top: 4px;
    width: 1px;
    height: 14px;
    background-color: #000;
}
.value-box button {
    margin-left: 7px;
}

.nav-bar {
    position: absolute;
    bottom: 4px;
    left: 50%;
    margin-left: -119px;
    height: 24px;
    display: flex;
    background-color: #f1f1f1;
}
.nav-bar button {
    width: 26px;
    padding-right: 2px;
}
.nav-bar .menu {
    width: 32px;
    gap: 3px;
    padding-right: 0;
}
.selection-info {
    position: absolute;
    right: 14px;
    bottom: 10px;
    font-size: 11px;
    font-weight: bold;
    color: #ddd;
}

/* timeline */
.timeline {
    height: 50px;
    padding: 2px 13px 0 11px;
    display: flex;
    align-items: center;
    gap: 11px;
    border-top: 2px solid #ccc;
    border-bottom: 2px solid #444;
}
.features {
    margin-left: 6px;
}
.settings {
    margin-left: auto;
}
```
